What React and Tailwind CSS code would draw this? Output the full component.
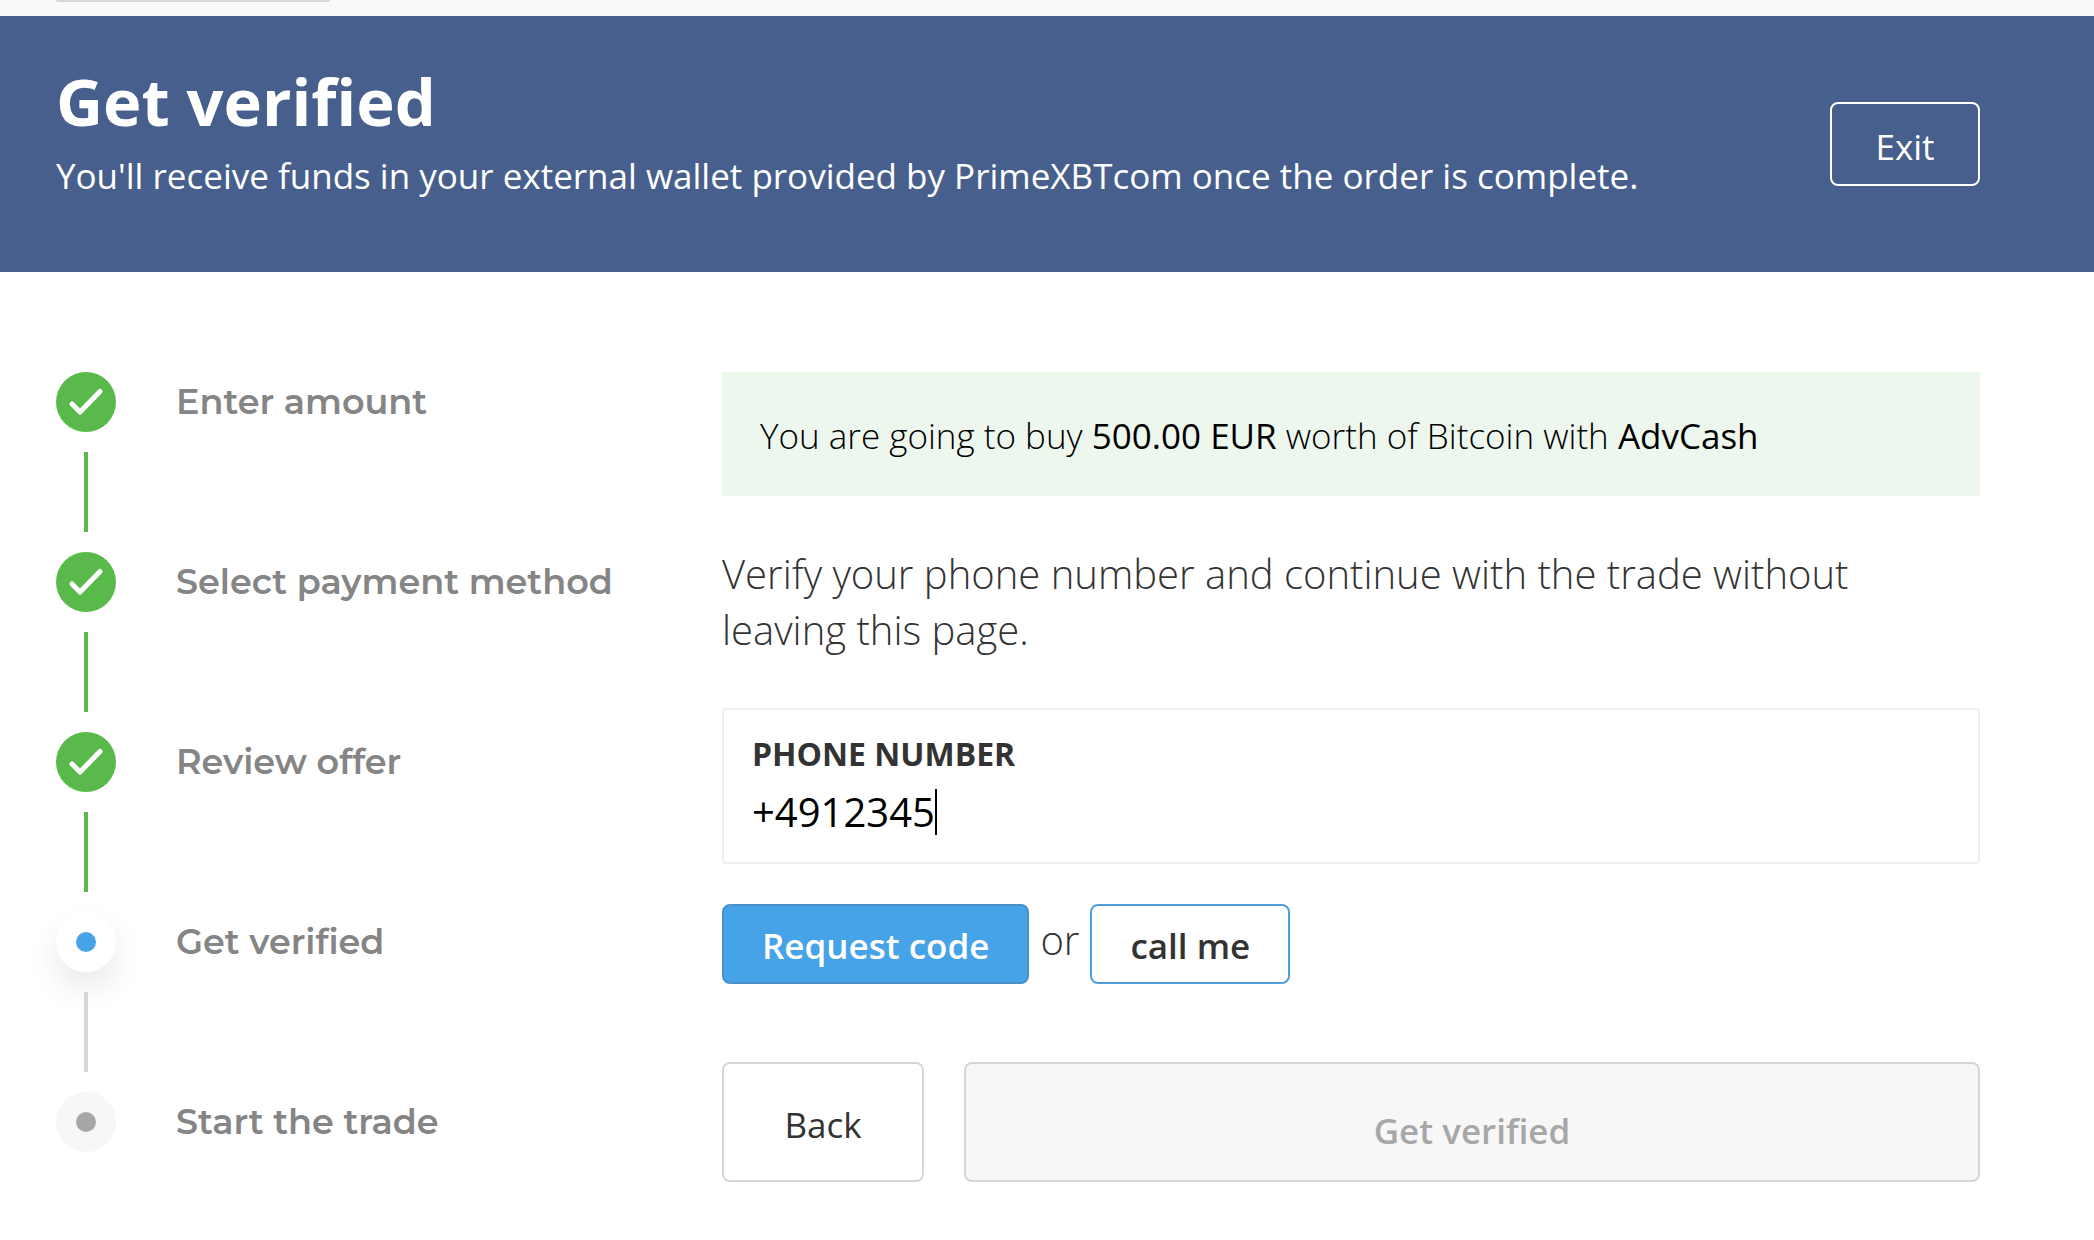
import { useState } from "react";

const steps = [
  { label: "Enter amount", status: "done" },
  { label: "Select payment method", status: "done" },
  { label: "Review offer", status: "done" },
  { label: "Get verified", status: "current" },
  { label: "Start the trade", status: "upcoming" },
];

function StepMarker({ status }) {
  if (status === "done") {
    return (
      <span className="flex size-15 items-center justify-center rounded-full bg-[#59ba4b]">
        <svg
          className="size-15"
          viewBox="0 0 60 60"
          fill="none"
          stroke="white"
          strokeWidth="5"
          strokeLinecap="round"
          strokeLinejoin="round"
          aria-hidden="true"
        >
          <path d="M16 32 L24 40 L44 19.5" />
        </svg>
      </span>
    );
  }

  if (status === "current") {
    return (
      <span className="flex size-15 items-center justify-center rounded-full bg-white shadow-[0_16px_32px_rgba(0,0,0,0.09)]">
        <span className="size-5 rounded-full bg-[#47a3e8]" />
      </span>
    );
  }

  return (
    <span className="flex size-15 items-center justify-center rounded-full bg-[#f7f7f7]">
      <span className="size-5 rounded-full bg-[#a7a7a7]" />
    </span>
  );
}

function Steps() {
  return (
    <ol>
      {steps.map((step, i) => (
        <li key={step.label}>
          <div className="flex items-center gap-15">
            <StepMarker status={step.status} />
            <span className="font-['Montserrat','Inter',sans-serif] text-[35px] leading-[52px] font-semibold text-[#858585]">
              {step.label}
            </span>
          </div>
          {i < steps.length - 1 && (
            <div className="flex w-15 justify-center py-5">
              {/* relative keeps the line above the marker's shadow */}
              <span
                className={
                  step.status === "done"
                    ? "relative h-20 w-1 bg-[#59ba4b]"
                    : "relative h-20 w-1 bg-[#d6d6d6]"
                }
              />
            </div>
          )}
        </li>
      ))}
    </ol>
  );
}

export default function App() {
  const [phone, setPhone] = useState("+4912345");

  return (
    <div className="min-h-screen bg-white font-['Open_Sans',sans-serif] text-[#333]">
      <div className="h-4 bg-[#f9f9f9] px-14">
        <div className="h-0.5 w-[274px] rounded-b-sm bg-[#d6d6d6]" />
      </div>

      <header className="flex items-center justify-between bg-[#465f8c] pr-[114px] pl-14 text-white">
        <div className="pt-12 pb-[70px]">
          <h1 className="text-[65px] leading-[74px] font-bold">Get verified</h1>
          <p className="mt-3 text-[35px] leading-[52px]">
            You'll receive funds in your external wallet provided by PrimeXBTcom
            once the order is complete.
          </p>
        </div>
        <button
          type="button"
          className="h-21 w-[150px] rounded-lg border-2 border-white pt-1.5 text-[35px] leading-[52px]"
        >
          Exit
        </button>
      </header>

      <main className="grid grid-cols-[9fr_17fr] pt-25 pr-[114px] pb-14 pl-14">
        <Steps />

        <form onSubmit={(e) => e.preventDefault()}>
          <p className="bg-[#eef7ee] px-[38px] pt-[38px] pb-[34px] text-[35px] leading-[52px] font-light text-black">
            You are going to buy{" "}
            <strong className="font-medium">500.00 EUR</strong> worth of
            Bitcoin with <strong className="font-medium">AdvCash</strong>
          </p>

          <p className="mt-[50px] text-[40px] leading-[56px] font-light">
            Verify your phone number and continue with the trade without leaving
            this page.
          </p>

          <div className="mt-[50px] rounded border-2 border-[#eee] px-7 pt-[22px] pb-[22px]">
            <label
              htmlFor="phone"
              className="block text-[32px] leading-[44px] font-bold uppercase"
            >
              Phone number
            </label>
            <div className="mt-2 flex items-center">
              <input
                id="phone"
                type="tel"
                value={phone}
                onChange={(e) => setPhone(e.target.value)}
                className="field-sizing-content text-[40px] leading-[56px] text-black caret-transparent outline-none"
              />
              <span className="h-[46px] w-0.5 bg-black" />
            </div>
          </div>

          <div className="mt-10 flex items-center">
            <button
              type="button"
              className="h-20 rounded-lg border-2 border-[#4a90c8] bg-[#47a3e8] px-[38px] pt-1 text-[35px] leading-[52px] font-semibold text-white"
            >
              Request code
            </button>
            <span className="px-[11px] pb-2 text-[40px] leading-[56px] font-light">
              or
            </span>
            <button
              type="button"
              className="h-20 rounded-lg border-2 border-[#4f9fdb] bg-white px-[38px] pt-1 text-[35px] leading-[52px] font-semibold"
            >
              call me
            </button>
          </div>

          <div className="mt-[78px] flex gap-10">
            <button
              type="button"
              className="h-30 w-[202px] rounded-lg border-2 border-[#d6d6d6] bg-white pt-1.5 text-[35px] leading-[52px]"
            >
              Back
            </button>
            <button
              type="submit"
              disabled
              className="h-30 flex-1 rounded-lg border-2 border-[#d6d6d6] bg-[#f7f7f7] pt-4.5 text-[35px] leading-[52px] font-semibold text-[#a7a7a7]"
            >
              Get verified
            </button>
          </div>
        </form>
      </main>
    </div>
  );
}
